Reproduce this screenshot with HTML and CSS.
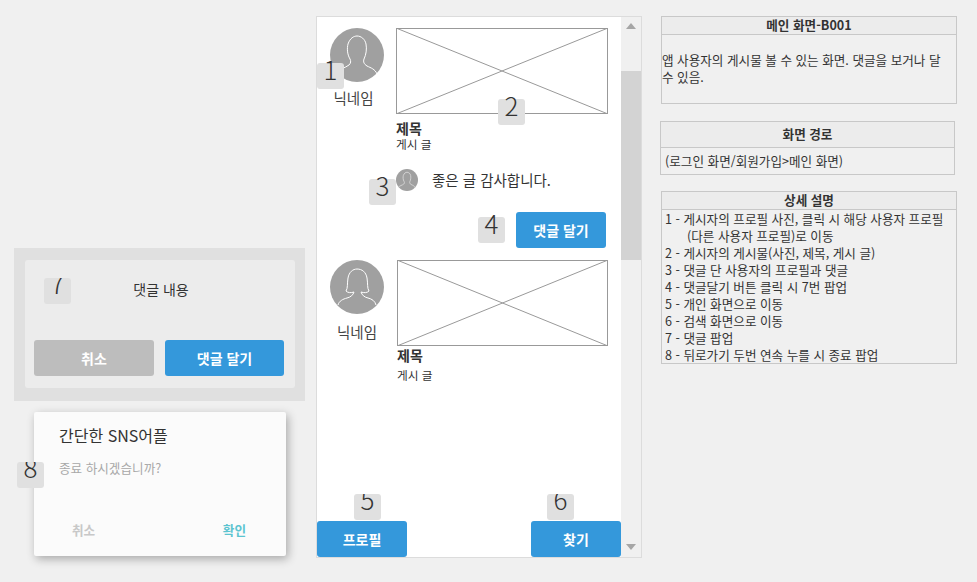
FILE: index.html
```html
<!DOCTYPE html>
<html lang="ko">
<head>
	<meta charset="utf-8">
	<title>메인 화면-B001</title>
	<link rel="stylesheet" href="styles.css">
</head>
<body>
	<div class="page">
		<div class="popups">
			<div class="replyPopup">
				<span class="badge badgeCut badge7">7</span>
				<div class="replyCard">
					<div class="replyText">댓글 내용</div>
					<div class="replyBtns">
						<div class="btn btnGray">취소</div>
						<div class="btn">댓글 달기</div>
					</div>
				</div>
			</div>
			<div class="exitDialog">
				<span class="badge badgeCut badge8">8</span>
				<div class="exitTitle">간단한 SNS어플</div>
				<div class="exitMsg">종료 하시겠습니까?</div>
				<div class="exitBtns">
					<span class="exitCancel">취소</span>
					<span class="exitOk">확인</span>
				</div>
			</div>
		</div>

		<div class="phone">
			<div class="feed">
				<div class="post">
					<div class="author">
						<svg class="avatar" viewBox="0 0 54 54">
							<circle cx="27" cy="27" r="27" fill="#a0a0a0"/>
							<path d="M6 45C9 41 15 40 19 37C21 35 21 33 20 31C17 26 17 20 18 16C20 10 24 8 27 8C31 8 35 11 36 16C37 21 36 27 34 31C33 34 34 36 37 38C41 40 45 41 47 46" fill="none" stroke="#fff" stroke-width="1"/>
						</svg>
						<div class="nick nickFirst">닉네임</div>
					</div>
					<div class="content">
						<svg class="photo" viewBox="0 0 212 86" preserveAspectRatio="none">
							<rect x="0.5" y="0.5" width="211" height="85" fill="#fff" stroke="#999"/>
							<path d="M0 0L212 86M212 0L0 86" stroke="#999" stroke-width="1" fill="none"/>
						</svg>
						<div class="postTitle">제목</div>
						<div class="postBody">게시 글</div>
						<div class="comment">
							<svg class="avatarSmall" viewBox="0 0 54 54">
								<circle cx="27" cy="27" r="27" fill="#a0a0a0"/>
								<path d="M6 45C9 41 15 40 19 37C21 35 21 33 20 31C17 26 17 20 18 16C20 10 24 8 27 8C31 8 35 11 36 16C37 21 36 27 34 31C33 34 34 36 37 38C41 40 45 41 47 46" fill="none" stroke="#ddd" stroke-width="2"/>
							</svg>
							<span class="commentText">좋은 글 감사합니다.</span>
						</div>
						<div class="replyRow">
							<div class="btn btnReply">댓글 달기</div>
						</div>
					</div>
				</div>

				<div class="post postSecond">
					<div class="author">
						<svg class="avatar" viewBox="0 0 54 54">
							<circle cx="27" cy="27" r="27" fill="#a0a0a0"/>
							<path d="M8 45C9 41 13 39 17 38C21 37 23 35 24 32C21 33 18 33 16 31C18 28 17 24 18 18C19 12 23 9 27 9C32 9 36 12 37 18C38 24 37 28 39 31C37 33 34 33 31 32C32 35 34 37 38 38C42 39 45 41 46 45" fill="none" stroke="#fff" stroke-width="1"/>
						</svg>
						<div class="nick">닉네임</div>
					</div>
					<div class="content contentSecond">
						<svg class="photo photoSecond" viewBox="0 0 211 86" preserveAspectRatio="none">
							<rect x="0.5" y="0.5" width="210" height="85" fill="#fff" stroke="#999"/>
							<path d="M0 0L211 86M211 0L0 86" stroke="#999" stroke-width="1" fill="none"/>
						</svg>
						<div class="postTitle postTitleSecond">제목</div>
						<div class="postBody postBodySecond">게시 글</div>
					</div>
				</div>

				<div class="tabs">
					<div class="btn btnTab">프로필</div>
					<div class="btn btnTab">찾기</div>
				</div>
			</div>

			<div class="scrollbar">
				<div class="arrowUp"></div>
				<div class="thumb"></div>
				<div class="arrowDown"></div>
			</div>

			<span class="badge badge1">1</span>
			<span class="badge badge2">2</span>
			<span class="badge badge3">3</span>
			<span class="badge badge4">4</span>
			<span class="badge badgeCut badge5">5</span>
			<span class="badge badgeCut badge6">6</span>
		</div>

		<div class="notes">
			<div class="noteBox introBox">
				<div class="noteHead">메인 화면-B001</div>
				<div class="noteIntro">앱 사용자의 게시물 볼 수 있는 화면. 댓글을 보거나 달 수 있음.</div>
			</div>
			<div class="noteBox pathBox">
				<div class="noteHead pathHead">화면 경로</div>
				<div class="pathText">(로그인 화면/회원가입&gt;메인 화면)</div>
			</div>
			<div class="noteBox detailBox">
				<div class="noteHead">상세 설명</div>
				<ul class="detailList">
					<li>1 - 게시자의 프로필 사진, 클릭 시 해당 사용자 프로필</li>
					<li class="indent">(다른 사용자 프로필)로 이동</li>
					<li>2 - 게시자의 게시물(사진, 제목, 게시 글)</li>
					<li>3 - 댓글 단 사용자의 프로필과 댓글</li>
					<li>4 - 댓글달기 버튼 클릭 시 7번 팝업</li>
					<li>5 - 개인 화면으로 이동</li>
					<li>6 - 검색 화면으로 이동</li>
					<li>7 - 댓글 팝업</li>
					<li>8 - 뒤로가기 두번 연속 누를 시 종료 팝업</li>
				</ul>
			</div>
		</div>
	</div>
</body>
</html>
```

FILE: styles.css
```css
* {
	box-sizing: border-box;
}

body {
	margin: 0;
	background: #f0f0f0;
	color: #333;
	font-family: "Noto Sans CJK KR", "Noto Sans", sans-serif;
	font-size: 12.6px;
	overflow: hidden;
}

.page {
	display: flex;
	align-items: flex-start;
	height: 582px;
	padding: 16px 0 0 14px;
}

/* numbered tags */
.badge {
	position: absolute;
	width: 27px;
	height: 26px;
	background: #e0e0e0;
	border-radius: 3px;
	color: #333;
	font-size: 26px;
	font-weight: 300;
	line-height: 11px;
	text-align: center;
	z-index: 2;
}

/* these digits are cut at the top in the wireframe */
.badgeCut {
	overflow: hidden;
	line-height: 10px;
}

.badge1 { left: 0; top: 46px; }
.badge2 { left: 181px; top: 82px; }
.badge3 { left: 52px; top: 162px; }
.badge4 { left: 161px; top: 200px; }
.badge5 { left: 37px; top: 477px; }
.badge6 { left: 230px; top: 477px; }
.badge7 { left: 30px; top: 30px; }
.badge8 { left: -17px; top: 50px; }

/* buttons */
.btn {
	height: 36px;
	background: #3498db;
	border-radius: 3px;
	color: #fff;
	font-size: 14px;
	font-weight: 700;
	line-height: 36px;
	text-align: center;
}

.btnGray {
	background: #bdbdbd;
}

/* left column */
.popups {
	width: 291px;
	padding-top: 232px;
}

.replyPopup {
	position: relative;
	height: 153px;
	padding: 12px 10px 13px 11px;
	background: #e0e0e0;
}

.replyCard {
	height: 128px;
	padding: 0 11px 0 9px;
	background: #ececec;
	border-radius: 3px;
}

.replyText {
	height: 80px;
	padding: 19px 0 0 4px;
	font-size: 14px;
	line-height: 20px;
	text-align: center;
}

.replyBtns {
	display: grid;
	grid-template-columns: 120px 119px;
	column-gap: 11px;
}

.exitDialog {
	position: relative;
	width: 252px;
	height: 144px;
	margin: 11px 0 0 20px;
	padding: 11px 25px 0;
	background: #fbfbfb;
	border-radius: 2px;
	box-shadow: 2px 3px 10px rgba(0, 0, 0, 0.3);
}

.exitTitle {
	font-size: 16px;
	line-height: 24px;
}

.exitMsg {
	margin-top: 11px;
	color: #a8a8a8;
	line-height: 20px;
}

.exitBtns {
	display: flex;
	justify-content: space-between;
	margin-top: 42px;
	padding: 0 15px 0 13px;
	font-weight: 700;
	line-height: 20px;
}

.exitCancel {
	color: #c8c8c8;
}

.exitOk {
	color: #5bc4d0;
}

/* phone */
.phone {
	position: relative;
	display: flex;
	width: 326px;
	height: 542px;
	margin-left: 11px;
	background: #fff;
	border: 1px solid #dcdcdc;
}

.feed {
	display: flex;
	flex-direction: column;
	width: 304px;
}

.post {
	display: flex;
	height: 232px;
	padding: 11px 0 0 13px;
}

.postSecond {
	height: 229px;
}

.author {
	width: 54px;
	flex: none;
}

.avatar {
	display: block;
	width: 54px;
	height: 54px;
}

.nick {
	margin-top: 8px;
	font-size: 14.5px;
	line-height: 20px;
	text-align: center;
	white-space: nowrap;
	color: #444;
}

.nickFirst {
	margin: 6px 0 0 -7px;
}

.content {
	width: 212px;
	margin-left: 12px;
}

.contentSecond {
	width: 211px;
	margin-left: 13px;
}

.photo {
	display: block;
	width: 212px;
	height: 86px;
}

.photoSecond {
	width: 211px;
}

.postTitle {
	margin-top: 5px;
	font-size: 14px;
	font-weight: 700;
	line-height: 18px;
}

.postTitleSecond {
	margin-top: 0;
}

.postBody {
	font-size: 11.7px;
	line-height: 14px;
}

.postBodySecond {
	margin-top: 4px;
}

.comment {
	display: flex;
	align-items: center;
	margin-top: 18px;
	font-size: 14.5px;
}

.commentText {
	margin-top: -2px;
}

.avatarSmall {
	width: 22px;
	height: 22px;
	margin-right: 14px;
}

.replyRow {
	display: flex;
	justify-content: flex-end;
	margin: 21px 2px 0 0;
}

.btnReply {
	width: 90px;
}

.tabs {
	display: flex;
	justify-content: space-between;
	margin-top: auto;
}

.btnTab {
	width: 90px;
}

.scrollbar {
	position: relative;
	width: 20px;
	padding-top: 54px;
	background: #f0f0f0;
}

.thumb {
	height: 189px;
	background: #d3d3d3;
}

.arrowUp,
.arrowDown {
	position: absolute;
	left: 5px;
	width: 0;
	height: 0;
	border-left: 5px solid transparent;
	border-right: 5px solid transparent;
}

.arrowUp {
	top: 6px;
	border-bottom: 6px solid #a6a6a6;
}

.arrowDown {
	bottom: 7px;
	border-top: 6px solid #a6a6a6;
}

/* notes column */
.notes {
	width: 297px;
	margin-left: 19px;
}

.noteBox {
	width: 296px;
	border: 1px solid #c8c8c8;
}

.noteHead {
	height: 18px;
	background: #ececec;
	border-bottom: 1px solid #c8c8c8;
	font-weight: 700;
	line-height: 16px;
	text-align: center;
}

.introBox {
	height: 88px;
}

.noteIntro {
	padding: 16px 12px 0 0;
	line-height: 17px;
}

.pathBox {
	width: 295px;
	height: 54px;
	margin: 17px 0 0 -1px;
}

.pathHead {
	height: 26px;
	line-height: 24px;
}

.pathText {
	padding: 3px 0 0 4px;
	line-height: 20px;
}

.detailBox {
	height: 173px;
	margin-top: 16px;
}

.detailList {
	margin: 0;
	padding: 0 0 0 3px;
	list-style: none;
	line-height: 17px;
}

.indent {
	padding-left: 22px;
}
```
